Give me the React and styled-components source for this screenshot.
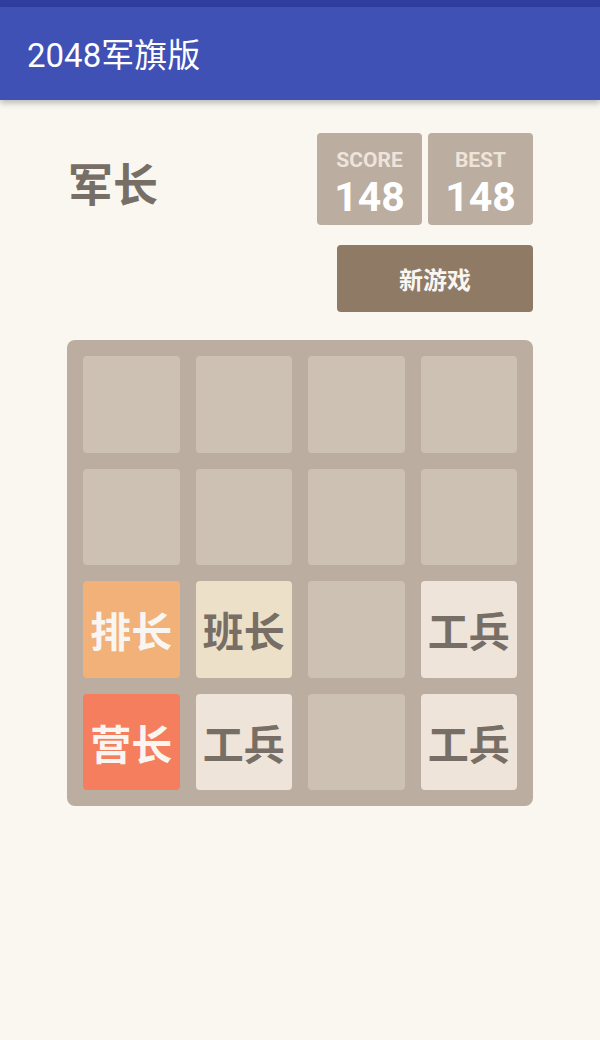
import React from "react";
import styled, { createGlobalStyle } from "styled-components";

const GlobalStyle = createGlobalStyle`
  html, body {
    margin: 0;
    padding: 0;
    background: #f9f7ef;
  }
  body {
    font-family: "Roboto", "Noto Sans CJK SC", sans-serif;
  }
`;

const colors = {
  text: "#776e65",
  board: "#bbada0",
  empty: "#cdc1b4",
};

const tileStyles = {
  工兵: { bg: "#eee4da", fg: "#776e65" },
  班长: { bg: "#ede0c8", fg: "#776e65" },
  排长: { bg: "#f2b179", fg: "#f9f6f2" },
  营长: { bg: "#f57e5f", fg: "#f9f6f2" },
};

const grid = [
  [null, null, null, null],
  [null, null, null, null],
  ["排长", "班长", null, "工兵"],
  ["营长", "工兵", null, "工兵"],
];

const App = () => {
  return (
    <>
      <GlobalStyle />
      <StatusBar />
      <AppBar>
        <h1>2048军旗版</h1>
      </AppBar>
      <Main>
        <TopRow>
          <Title>军长</Title>
          <Scores>
            <ScoreBox>
              <span className='label'>SCORE</span>
              <span className='value'>148</span>
            </ScoreBox>
            <ScoreBox>
              <span className='label'>BEST</span>
              <span className='value'>148</span>
            </ScoreBox>
          </Scores>
        </TopRow>
        <ButtonRow>
          <NewGameButton>新游戏</NewGameButton>
        </ButtonRow>
        <Board>
          {grid.flat().map((name, i) =>
            name ? (
              <Tile key={i} $bg={tileStyles[name].bg} $fg={tileStyles[name].fg}>
                {name}
              </Tile>
            ) : (
              <Tile key={i} $bg={colors.empty} />
            )
          )}
        </Board>
      </Main>
    </>
  );
};

const StatusBar = styled.div`
  height: 7px;
  background: #303f9f;
`;

const AppBar = styled.header`
  height: 93px;
  background: #3f51b5;
  display: flex;
  align-items: center;
  padding-left: 27px;
  box-shadow: 0 3px 6px rgba(0, 0, 0, 0.25);
  position: relative;

  h1 {
    margin: 0;
    margin-top: -2px;
    color: #fff;
    font-family: "Roboto", "Noto Sans CJK SC", sans-serif;
    font-weight: 400;
    font-size: 33px;
    letter-spacing: 0;
  }
`;

const Main = styled.main`
  width: 466px;
  margin: 33px auto 0;
`;

const TopRow = styled.div`
  display: flex;
  justify-content: space-between;
  align-items: center;
`;

const Title = styled.div`
  font-family: "Noto Sans CJK SC", sans-serif;
  font-weight: 700;
  font-size: 45px;
  color: ${colors.text};
  padding-left: 1px;
  padding-top: 6px;
`;

const Scores = styled.div`
  display: flex;
  gap: 6px;
`;

const ScoreBox = styled.div`
  width: 105px;
  height: 92px;
  background: ${colors.board};
  border-radius: 4px;
  display: flex;
  flex-direction: column;
  align-items: center;
  box-sizing: border-box;
  padding-top: 13px;

  .label {
    font-family: "Roboto", sans-serif;
    font-weight: 700;
    font-size: 21px;
    line-height: 28px;
    color: #eee4da;
  }

  .value {
    font-family: "Roboto", sans-serif;
    font-weight: 700;
    font-size: 41px;
    line-height: 46px;
    color: #fff;
  }
`;

const ButtonRow = styled.div`
  display: flex;
  justify-content: flex-end;
  margin-top: 20px;
`;

const NewGameButton = styled.button`
  width: 196px;
  height: 67px;
  border: none;
  border-radius: 4px;
  background: #8f7a66;
  color: #f9f6f2;
  font-family: "Noto Sans CJK SC", sans-serif;
  font-weight: 700;
  font-size: 24px;
  padding: 0;
  cursor: pointer;
`;

const Board = styled.div`
  margin-top: 28px;
  background: ${colors.board};
  border-radius: 8px;
  padding: 16px;
  display: grid;
  grid-template-columns: repeat(4, 1fr);
  grid-auto-rows: 96.5px;
  gap: 16px;
`;

const Tile = styled.div`
  background: ${(p) => p.$bg};
  color: ${(p) => p.$fg || colors.text};
  border-radius: 4px;
  display: flex;
  align-items: center;
  justify-content: center;
  font-family: "Noto Sans CJK SC", sans-serif;
  font-weight: 700;
  font-size: 41px;
`;

export default App;
